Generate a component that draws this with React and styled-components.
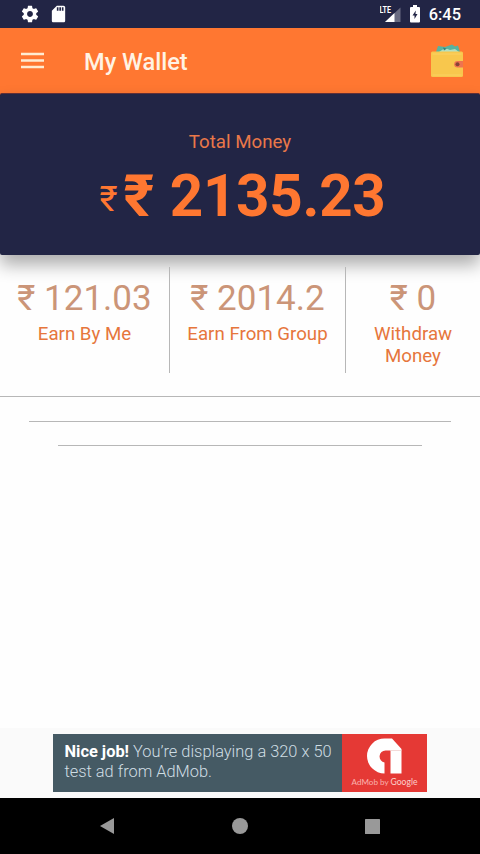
import React from 'react';
import styled, { createGlobalStyle, ThemeProvider } from 'styled-components';

const theme = {
  colors: {
    navy: '#222545',
    orange: '#ff7731',
    amount: '#cb9578',
    label: '#e6763c',
    line: '#b7b7b7',
  },
};

const GlobalStyle = createGlobalStyle`
  * {
    box-sizing: border-box;
    margin: 0;
    padding: 0;
  }

  body {
    background: #fff;
    font-family: Roboto, 'Noto Sans', sans-serif;
    overflow: hidden;
  }
`;

const Screen = styled.div`
  display: flex;
  flex-direction: column;
  width: 480px;
  height: 854px;
  background: #fefefe;
  overflow: hidden;
`;

const StatusBar = styled.header`
  display: flex;
  align-items: center;
  flex: none;
  height: 28px;
  padding: 0 19px 0 20px;
  background: ${props => props.theme.colors.navy};
  color: #fff;
`;

const StatusIcon = styled.svg`
  display: block;
  flex: none;
  fill: #fff;
  margin-left: ${props => props.$gap || 0}px;
`;

const Spacer = styled.div`
  flex: 1;
`;

const Clock = styled.span`
  margin-left: 9px;
  padding-top: 2px;
  font-size: 16.4px;
  font-weight: 500;
  line-height: 20px;
`;

const AppBar = styled.div`
  display: flex;
  align-items: center;
  flex: none;
  height: 65px;
  padding: 1px 16px 0 21px;
  background: ${props => props.theme.colors.orange};
`;

const MenuIcon = styled.svg`
  display: block;
  stroke: #ffecd2;
  stroke-width: 2.3;
`;

const Title = styled.h1`
  flex: 1;
  margin-left: 40px;
  padding-top: 2px;
  color: #fff3e4;
  font-size: 23.6px;
  font-weight: 500;
  line-height: 28px;
`;

const TotalBacking = styled.div`
  flex: none;
  height: 162px;
  background: linear-gradient(${props => props.theme.colors.orange} 5px, transparent 5px);
`;

const TotalCard = styled.section`
  display: flex;
  flex-direction: column;
  align-items: center;
  height: 162px;
  padding-top: 37px;
  border-top: 1px solid #612f36;
  border-radius: 2px;
  background: ${props => props.theme.colors.navy};
  color: ${props => props.theme.colors.orange};
  box-shadow: 0 10px 17px rgba(0, 0, 0, 0.32);
`;

const TotalLabel = styled.p`
  color: #ea7849;
  font-size: 18.7px;
  line-height: 22px;
`;

const TotalRow = styled.div`
  display: flex;
  align-items: center;
  height: 70px;
  margin: 8px 0 0 5px;
`;

const Currency = styled.span`
  padding-top: 8px;
  font-size: 35px;
  line-height: 42px;
`;

const TotalAmount = styled.span`
  margin-left: 6px;
  font-size: 58.3px;
  font-weight: 700;
  letter-spacing: -0.25px;
  line-height: 70px;
  word-spacing: 1.5px;
`;

const Stats = styled.section`
  display: flex;
  flex: none;
  height: 141px;
  padding-top: 12px;
`;

const Stat = styled.div`
  width: ${props => props.$width}px;
  height: 106px;
  padding: 11px 8px 0;
  text-align: center;
  border-right: ${props => (props.$last ? 'none' : `1px solid ${props.theme.colors.line}`)};
`;

const Amount = styled.p`
  color: ${props => props.theme.colors.amount};
  font-size: 35px;
  line-height: 42px;
  white-space: nowrap;
`;

const Label = styled.p`
  margin-top: 3px;
  color: ${props => props.theme.colors.label};
  font-size: 18.7px;
  line-height: 22px;
`;

const Rule = styled.hr`
  flex: none;
  height: 1px;
  margin: 0 ${props => props.$inset}px 23.5px;
  border: 0;
  background: ${props => props.theme.colors.line};
`;

const AdSlot = styled.div`
  flex: none;
  display: flex;
  justify-content: center;
  height: 70px;
  padding-top: 6px;
  background: #fafafa;
`;

const AdBanner = styled.div`
  display: flex;
  width: 374px;
  height: 58px;
  background: #455a64;
`;

const AdText = styled.p`
  flex: 1;
  padding: 8px 0 0 11.5px;
  color: #cfdde3;
  font-size: 16.4px;
  font-weight: 300;
  line-height: 19.5px;
  white-space: nowrap;

  b {
    color: #fff;
    font-weight: 700;
  }
`;

const AdBrand = styled.div`
  display: flex;
  flex-direction: column;
  align-items: center;
  width: 85px;
  padding-top: 4px;
  background: #e53935;
`;

const AdCredit = styled.span`
  margin-top: 3px;
  color: #f9b3ae;
  font-family: Lato, sans-serif;
  font-size: 8.1px;
  line-height: 11px;
  white-space: nowrap;

  b {
    color: #fcd0cc;
    font-weight: 400;
    font-size: 8.6px;
  }
`;

const NavBar = styled.nav`
  display: grid;
  grid-template-columns: repeat(3, 133px);
  justify-content: center;
  align-items: center;
  justify-items: center;
  flex: none;
  height: 56px;
  padding-right: 1px;
  background: #000;
`;

const NavIcon = styled.svg`
  display: block;
  fill: #999;
`;

const stats = [
  { amount: '₹ 121.03', label: 'Earn By Me', width: 170 },
  { amount: '₹ 2014.2', label: 'Earn From Group', width: 176 },
  { amount: '₹ 0', label: 'Withdraw Money', width: 134 },
];

const GearIcon = () => (
  <StatusIcon width="20" height="20" viewBox="0 0 24 24">
    <path d="M19.43 12.98c.04-.32.07-.64.07-.98s-.03-.66-.07-.98l2.11-1.65c.19-.15.24-.42.12-.64l-2-3.46c-.12-.22-.39-.3-.61-.22l-2.49 1c-.52-.4-1.08-.73-1.69-.98l-.38-2.65A.488.488 0 0 0 14 2h-4c-.25 0-.46.18-.49.42l-.38 2.65c-.61.25-1.17.59-1.69.98l-2.49-1c-.23-.09-.49 0-.61.22l-2 3.46c-.13.22-.07.49.12.64l2.11 1.65c-.04.32-.07.65-.07.98s.03.66.07.98l-2.11 1.65c-.19.15-.24.42-.12.64l2 3.46c.12.22.39.3.61.22l2.49-1c.52.4 1.08.73 1.69.98l.38 2.65c.03.24.24.42.49.42h4c.25 0 .46-.18.49-.42l.38-2.65c.61-.25 1.17-.59 1.69-.98l2.49 1c.23.09.49 0 .61-.22l2-3.46c.12-.22.07-.49-.12-.64l-2.11-1.65zM12 15.5c-1.93 0-3.5-1.57-3.5-3.5s1.57-3.5 3.5-3.5 3.5 1.57 3.5 3.5-1.57 3.5-3.5 3.5z" />
  </StatusIcon>
);

const CardIcon = () => (
  <StatusIcon $gap={8} width="21" height="20" viewBox="0 0 24 24">
    <path d="M18 2h-8L4.02 8 4 20c0 1.1.9 2 2 2h12c1.1 0 2-.9 2-2V4c0-1.1-.9-2-2-2zm-6 6h-2V4h2v4zm3 0h-2V4h2v4zm3 0h-2V4h2v4z" />
  </StatusIcon>
);

const SignalIcon = () => (
  <StatusIcon width="22" height="18" viewBox="0 0 22 18">
    <path d="M20.5 2.5V17H5z" fill="#696b81" />
    <path d="M14.5 8V17H5z" />
    <text x="-0.5" y="8" fontSize="9.5" fontWeight="700" textLength="11.5" lengthAdjust="spacingAndGlyphs">LTE</text>
  </StatusIcon>
);

const BatteryIcon = () => (
  <StatusIcon $gap={8} width="10" height="18" viewBox="0 0 10 18">
    <path d="M3 0h4v2h2q1 0 1 1v13.5q0 1-1 1H1q-1 0-1-1V3q0-1 1-1h2z" />
    <path d="M5.8 5.5 2.5 10.5h2V14l3-5H5.5z" fill="#222545" />
  </StatusIcon>
);

const WalletIcon = () => (
  <svg width="34" height="34" viewBox="0 0 34 34">
    <path d="m6 8 2-6 7 1 7-2.500 3 2 3-1 2 6.500z" fill="#58b3a0" />
    <path d="m9 8 6-4 5 2 5-1 4 3z" fill="#b4e0c0" />
    <path d="m13 3.500 4 1-3 2z" fill="#32857c" />
    <rect x="1" y="7.500" width="32" height="25.500" rx="1.500" fill="#f8c74d" />
    <path d="M2.500 10h29M2.500 31h29" stroke="#fbd162" strokeWidth="1" />
    <path d="M33 17h-5.500a3.300 3.300 0 0 0 0 6.600H33z" fill="#ee7350" />
    <circle cx="27.500" cy="20.300" r="2" fill="#864238" />
  </svg>
);

const AdMobLogo = () => (
  <svg width="35" height="36" viewBox="0 0 35 36">
    <path
      d="M17.500 35.500A17.500 17.500 0 0 1 17.500.5H25L34.500 11v24.500H23.500V12.500H18.500a6 6 0 0 0-1 11.900z"
      fill="#fff"
    />
    <path d="M23.500 12.500h11" stroke="#eecbc9" strokeWidth="0.700" />
  </svg>
);

export default () => (
  <ThemeProvider theme={theme}>
    <>
      <GlobalStyle />
      <Screen>
        <StatusBar>
          <GearIcon />
          <CardIcon />
          <Spacer />
          <SignalIcon />
          <BatteryIcon />
          <Clock>6:45</Clock>
        </StatusBar>
        <AppBar>
          <MenuIcon width="23" height="18" viewBox="0 0 23 18">
            <path d="M0 2h23M0 8.500h23M0 15h23" />
          </MenuIcon>
          <Title>My Wallet</Title>
          <WalletIcon />
        </AppBar>
        <TotalBacking>
          <TotalCard>
            <TotalLabel>Total Money</TotalLabel>
            <TotalRow>
              <Currency>₹</Currency>
              <TotalAmount>₹ 2135.23</TotalAmount>
            </TotalRow>
          </TotalCard>
        </TotalBacking>
        <Stats>
          {stats.map(({ amount, label, width }, i) => (
            <Stat key={label} $width={width} $last={i === stats.length - 1}>
              <Amount>{amount}</Amount>
              <Label>{label}</Label>
            </Stat>
          ))}
        </Stats>
        <Rule $inset={0} />
        <Rule $inset={29} />
        <Rule $inset={58} />
        <Spacer />
        <AdSlot>
          <AdBanner>
            <AdText>
              <b>Nice job!</b> You’re displaying a 320 x 50
              <br />
              test ad from AdMob.
            </AdText>
            <AdBrand>
              <AdMobLogo />
              <AdCredit>
                AdMob by <b>Google</b>
              </AdCredit>
            </AdBrand>
          </AdBanner>
        </AdSlot>
        <NavBar>
          <NavIcon width="16" height="18" viewBox="0 0 16 18">
            <path d="M15 1v16L1 9z" />
          </NavIcon>
          <NavIcon width="16" height="16" viewBox="0 0 16 16">
            <circle cx="8" cy="8" r="8" />
          </NavIcon>
          <NavIcon width="15" height="15" viewBox="0 0 15 15">
            <rect width="15" height="15" rx="0.5" />
          </NavIcon>
        </NavBar>
      </Screen>
    </>
  </ThemeProvider>
);
